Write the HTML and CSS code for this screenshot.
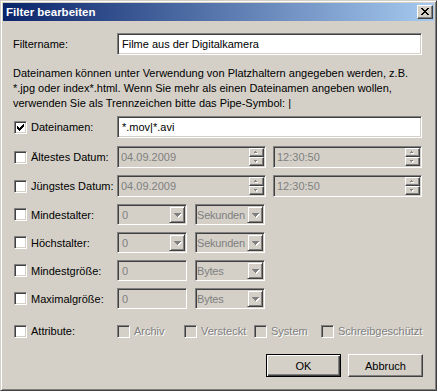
FILE: index.html
```html
<!DOCTYPE html>
<html lang="de">
<head>
<meta charset="utf-8">
<title>Filter bearbeiten</title>
<link rel="stylesheet" href="styles.css">
</head>
<body>
<div class="window">
  <div class="titlebar">
    <span class="title">Filter bearbeiten</span>
    <span class="close"><svg width="8" height="7" viewBox="0 0 8 7"><path fill="#000" d="M0 0h2v1H0z M6 0h2v1H6z M1 1h2v1H1z M5 1h2v1H5z M2 2h4v1H2z M3 3h2v1H3z M2 4h4v1H2z M1 5h2v1H1z M5 5h2v1H5z M0 6h2v1H0z M6 6h2v1H6z"/></svg></span>
  </div>
  <div class="client">
    <div class="row">
      <span class="lbl plain">Filtername:</span>
      <div class="edit full">Filme aus der Digitalkamera</div>
    </div>
    <p class="desc">Dateinamen können unter Verwendung von Platzhaltern angegeben werden, z.B.<br>*.jpg oder index*.html. Wenn Sie mehr als einen Dateinamen angeben wollen,<br>verwenden Sie als Trennzeichen bitte das Pipe-Symbol: |</p>

    <div class="row r-files">
      <span class="lbl"><span class="cb"><svg width="7" height="7" viewBox="0 0 7 7"><path fill="#000" d="M0 2h1v3H0z M1 3h1v3H1z M2 4h1v3H2z M3 3h1v3H3z M4 2h1v3H4z M5 1h1v3H5z M6 0h1v3H6z"/></svg></span>Dateinamen:</span>
      <div class="edit full">*.mov|*.avi</div>
    </div>

    <div class="row r-date">
      <span class="lbl"><span class="cb"></span>Ältestes Datum:</span>
      <div class="fields">
        <div class="edit spinfield dis"><span class="val">04.09.2009</span><span class="spin"><span class="sb"><svg width="4" height="3" viewBox="0 0 4 3"><path fill="#fff" d="M2 1h1v1H2z M1 2h3v1H1z"/><path fill="#808080" d="M1 0h1v1H1z M0 1h3v1H0z"/></svg></span><span class="sb"><svg width="4" height="3" viewBox="0 0 4 3"><path fill="#fff" d="M1 1h3v1H1z M2 2h1v1H2z"/><path fill="#808080" d="M0 0h3v1H0z M1 1h1v1H1z"/></svg></span></span></div>
        <div class="edit spinfield dis"><span class="val">12:30:50</span><span class="spin"><span class="sb"><svg width="4" height="3" viewBox="0 0 4 3"><path fill="#fff" d="M2 1h1v1H2z M1 2h3v1H1z"/><path fill="#808080" d="M1 0h1v1H1z M0 1h3v1H0z"/></svg></span><span class="sb"><svg width="4" height="3" viewBox="0 0 4 3"><path fill="#fff" d="M1 1h3v1H1z M2 2h1v1H2z"/><path fill="#808080" d="M0 0h3v1H0z M1 1h1v1H1z"/></svg></span></span></div>
      </div>
    </div>

    <div class="row r-date">
      <span class="lbl"><span class="cb"></span>Jüngstes Datum:</span>
      <div class="fields">
        <div class="edit spinfield dis"><span class="val">04.09.2009</span><span class="spin"><span class="sb"><svg width="4" height="3" viewBox="0 0 4 3"><path fill="#fff" d="M2 1h1v1H2z M1 2h3v1H1z"/><path fill="#808080" d="M1 0h1v1H1z M0 1h3v1H0z"/></svg></span><span class="sb"><svg width="4" height="3" viewBox="0 0 4 3"><path fill="#fff" d="M1 1h3v1H1z M2 2h1v1H2z"/><path fill="#808080" d="M0 0h3v1H0z M1 1h1v1H1z"/></svg></span></span></div>
        <div class="edit spinfield dis"><span class="val">12:30:50</span><span class="spin"><span class="sb"><svg width="4" height="3" viewBox="0 0 4 3"><path fill="#fff" d="M2 1h1v1H2z M1 2h3v1H1z"/><path fill="#808080" d="M1 0h1v1H1z M0 1h3v1H0z"/></svg></span><span class="sb"><svg width="4" height="3" viewBox="0 0 4 3"><path fill="#fff" d="M1 1h3v1H1z M2 2h1v1H2z"/><path fill="#808080" d="M0 0h3v1H0z M1 1h1v1H1z"/></svg></span></span></div>
      </div>
    </div>

    <div class="row r-small">
      <span class="lbl"><span class="cb"></span>Mindestalter:</span>
      <div class="fields small">
        <div class="edit combo dis"><span class="val">0</span><span class="drop"><svg width="8" height="5" viewBox="0 0 8 5"><path fill="#fff" d="M1 1h7v1H1z M2 2h5v1H2z M3 3h3v1H3z M4 4h1v1H4z"/><path fill="#808080" d="M0 0h7v1H0z M1 1h5v1H1z M2 2h3v1H2z M3 3h1v1H3z"/></svg></span></div>
        <div class="edit combo dis unit"><span class="val">Sekunden</span><span class="drop"><svg width="8" height="5" viewBox="0 0 8 5"><path fill="#fff" d="M1 1h7v1H1z M2 2h5v1H2z M3 3h3v1H3z M4 4h1v1H4z"/><path fill="#808080" d="M0 0h7v1H0z M1 1h5v1H1z M2 2h3v1H2z M3 3h1v1H3z"/></svg></span></div>
      </div>
    </div>

    <div class="row r-small">
      <span class="lbl"><span class="cb"></span>Höchstalter:</span>
      <div class="fields small">
        <div class="edit combo dis"><span class="val">0</span><span class="drop"><svg width="8" height="5" viewBox="0 0 8 5"><path fill="#fff" d="M1 1h7v1H1z M2 2h5v1H2z M3 3h3v1H3z M4 4h1v1H4z"/><path fill="#808080" d="M0 0h7v1H0z M1 1h5v1H1z M2 2h3v1H2z M3 3h1v1H3z"/></svg></span></div>
        <div class="edit combo dis unit"><span class="val">Sekunden</span><span class="drop"><svg width="8" height="5" viewBox="0 0 8 5"><path fill="#fff" d="M1 1h7v1H1z M2 2h5v1H2z M3 3h3v1H3z M4 4h1v1H4z"/><path fill="#808080" d="M0 0h7v1H0z M1 1h5v1H1z M2 2h3v1H2z M3 3h1v1H3z"/></svg></span></div>
      </div>
    </div>

    <div class="row r-small">
      <span class="lbl"><span class="cb"></span>Mindestgröße:</span>
      <div class="fields small">
        <div class="edit plainedit dis"><span class="val">0</span></div>
        <div class="edit combo dis unit"><span class="val">Bytes</span><span class="drop"><svg width="8" height="5" viewBox="0 0 8 5"><path fill="#fff" d="M1 1h7v1H1z M2 2h5v1H2z M3 3h3v1H3z M4 4h1v1H4z"/><path fill="#808080" d="M0 0h7v1H0z M1 1h5v1H1z M2 2h3v1H2z M3 3h1v1H3z"/></svg></span></div>
      </div>
    </div>

    <div class="row r-small">
      <span class="lbl"><span class="cb"></span>Maximalgröße:</span>
      <div class="fields small">
        <div class="edit plainedit dis"><span class="val">0</span></div>
        <div class="edit combo dis unit"><span class="val">Bytes</span><span class="drop"><svg width="8" height="5" viewBox="0 0 8 5"><path fill="#fff" d="M1 1h7v1H1z M2 2h5v1H2z M3 3h3v1H3z M4 4h1v1H4z"/><path fill="#808080" d="M0 0h7v1H0z M1 1h5v1H1z M2 2h3v1H2z M3 3h1v1H3z"/></svg></span></div>
      </div>
    </div>

    <div class="row r-attr">
      <span class="lbl"><span class="cb"></span>Attribute:</span>
      <div class="attrs">
        <span class="attr a1"><span class="cb dcb"></span><span class="dtext">Archiv</span></span>
        <span class="attr a2"><span class="cb dcb"></span><span class="dtext">Versteckt</span></span>
        <span class="attr a3"><span class="cb dcb"></span><span class="dtext">System</span></span>
        <span class="attr"><span class="cb dcb"></span><span class="dtext">Schreibgeschützt</span></span>
      </div>
    </div>

    <div class="buttons">
      <span class="btn default">OK</span>
      <span class="btn">Abbruch</span>
    </div>
  </div>
</div>
</body>
</html>
```

FILE: styles.css
```css
* { box-sizing: border-box; }
html, body { margin: 0; padding: 0; }
body {
  width: 437px;
  height: 391px;
  overflow: hidden;
  background: #d4d0c8;
  font-family: "Liberation Sans", Arial, sans-serif;
  font-size: 11px;
  color: #000;
}
.window {
  width: 437px;
  height: 391px;
  border: 1px solid;
  border-color: #d4d0c8 #404040 #404040 #d4d0c8;
  box-shadow: inset 1px 1px #fff, inset -1px -1px #808080;
  padding: 2px;
  display: flex;
  flex-direction: column;
  background: #d4d0c8;
}
.titlebar {
  height: 18px;
  flex: none;
  display: flex;
  align-items: center;
  justify-content: space-between;
  background: linear-gradient(to right, #0a246a, #a6caf0);
  padding: 0 1px 0 3px;
}
.title {
  color: #fff;
  font-weight: bold;
  font-size: 11.5px;
}
.close {
  width: 16px;
  height: 14px;
  background: #d4d0c8;
  border: 1px solid;
  border-color: #fff #404040 #404040 #fff;
  box-shadow: inset -1px -1px #808080;
  display: flex;
  align-items: center;
  justify-content: center;
  padding: 0 1px 1px 0;
}
.close svg { display: block; }
.client {
  flex: 1;
  padding: 12px 12px 0 10px;
  display: flex;
  flex-direction: column;
}
.row {
  display: flex;
  align-items: center;
  height: 22px;
  flex: none;
}
.lbl {
  width: 104px;
  flex: none;
  display: flex;
  align-items: center;
  white-space: nowrap;
}
.cb {
  width: 13px;
  height: 13px;
  flex: none;
  margin: 0 4px 0 1px;
  border: 1px solid;
  border-color: #808080 #fff #fff #808080;
  box-shadow: inset 1px 1px #404040, inset -1px -1px #d4d0c8;
  background: #fff;
  display: flex;
  align-items: center;
  justify-content: center;
}
.cb svg { display: block; }
.cb.dcb { background: #d4d0c8; margin-left: 0; }
.edit {
  height: 22px;
  border: 1px solid;
  border-color: #808080 #fff #fff #808080;
  box-shadow: inset 1px 1px #404040, inset -1px -1px #d4d0c8;
  background: #fff;
  padding: 1px 1px 1px 4px;
  display: flex;
  align-items: center;
  white-space: nowrap;
  line-height: 18px;
}
.edit.full { flex: 1; padding-left: 4px; }
.edit.dis { background: #d4d0c8; color: #808080; }
.val { flex: 1; min-width: 0; }
.desc {
  margin: 11px 0 5px 0;
  line-height: 15px;
  white-space: nowrap;
}
.r-date { margin-top: 8px; }
.r-date + .r-date { margin-top: 7px; }
.fields {
  flex: 1;
  display: flex;
  gap: 7px;
}
.spinfield {
  width: 149px;
  padding: 1px 1px 1px 3px;
  align-items: stretch;
}
.spinfield .val { display: flex; align-items: center; }
.spin {
  width: 15px;
  display: flex;
  flex-direction: column;
}
.sb {
  height: 9px;
  background: #d4d0c8;
  border: 1px solid;
  border-color: #fff #404040 #404040 #fff;
  box-shadow: inset -1px -1px #808080;
  display: flex;
  align-items: center;
  justify-content: center;
  padding: 0 1px 1px 0;
}
.sb svg { display: block; }
.r-small { margin-top: 7px; height: 21px; }
.fields.small { gap: 8px; }
.combo, .plainedit {
  width: 70px;
  height: 21px;
  padding: 1px 1px 1px 4px;
  align-items: stretch;
}
.combo .val, .plainedit .val { display: flex; align-items: center; }
.combo.unit { padding-left: 1px; }
.combo.unit .val { letter-spacing: -0.2px; }
.drop {
  width: 16px;
  flex: none;
  position: relative;
  background: #d4d0c8;
  border: 1px solid;
  border-color: #d4d0c8 #404040 #404040 #d4d0c8;
  box-shadow: inset 1px 1px #fff, inset -1px -1px #808080;
  display: flex;
  align-items: center;
  justify-content: center;
  padding: 1px 0 0 1px;
}
.drop svg { display: block; }
.r-attr { margin-top: 11px; }
.attrs {
  display: flex;
  align-items: center;
}
.attr {
  display: flex;
  align-items: center;
  white-space: nowrap;
}
.attr.a1 { width: 67px; }
.attr.a2 { width: 70px; }
.attr.a3 { width: 67px; }
.dtext {
  color: #808080;
  text-shadow: 1px 1px 0 #fff;
}
.buttons {
  display: flex;
  justify-content: flex-end;
  gap: 7px;
  margin: 12px -1px 0 0;
}
.btn {
  width: 75px;
  height: 23px;
  display: flex;
  align-items: center;
  justify-content: center;
  background: #d4d0c8;
  border: 1px solid;
  border-color: #fff #404040 #404040 #fff;
  box-shadow: inset -1px -1px #808080;
}
.btn.default {
  border-color: #000;
  box-shadow: inset 1px 1px #fff, inset -1px -1px #404040, inset -2px -2px #808080;
}
```
